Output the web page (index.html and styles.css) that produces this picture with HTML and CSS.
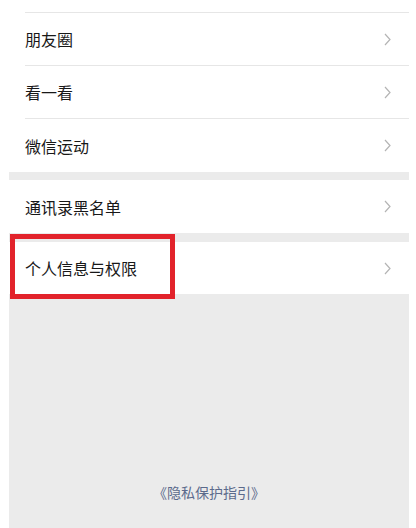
FILE: index.html
```html
<!DOCTYPE html>
<html lang="zh-CN">
<head>
<meta charset="utf-8">
<link rel="stylesheet" href="styles.css">
</head>
<body>
<div class="page">
  <div class="group">
    <div class="stub"></div>
    <div class="row"><div class="row-body"><span class="label">朋友圈</span><svg class="chev" viewBox="0 0 7 13" width="7" height="13"><polyline points="1,1 6,6.5 1,12" /></svg></div></div>
    <div class="row"><div class="row-body"><span class="label">看一看</span><svg class="chev" viewBox="0 0 7 13" width="7" height="13"><polyline points="1,1 6,6.5 1,12" /></svg></div></div>
    <div class="row"><div class="row-body tall"><span class="label">微信运动</span><svg class="chev" viewBox="0 0 7 13" width="7" height="13"><polyline points="1,1 6,6.5 1,12" /></svg></div></div>
  </div>
  <div class="group">
    <div class="row"><div class="row-body first"><span class="label">通讯录黑名单</span><svg class="chev" viewBox="0 0 7 13" width="7" height="13"><polyline points="1,1 6,6.5 1,12" /></svg></div></div>
  </div>
  <div class="group highlight-group">
    <div class="row"><div class="row-body first short"><span class="label">个人信息与权限</span><svg class="chev" viewBox="0 0 7 13" width="7" height="13"><polyline points="1,1 6,6.5 1,12" /></svg></div></div>
    <div class="highlight"></div>
  </div>
  <div class="footer"><span class="link">《隐私保护指引》</span></div>
</div>
</body>
</html>
```

FILE: styles.css
```css
html, body {
  margin: 0;
  padding: 0;
  background: #ffffff;
}
body {
  font-family: "Noto Sans CJK SC", "Noto Sans", sans-serif;
}
.page {
  margin-left: 9px;
  width: 400px;
  height: 528px;
  background: #ebebeb;
  display: flex;
  flex-direction: column;
  gap: 8px;
}
.group {
  background: #ffffff;
}
.highlight-group {
  position: relative;
  margin-top: 1px;
}
.stub {
  height: 12px;
}
.row {
  padding-left: 16px;
}
.row-body {
  height: 52px;
  border-top: 1px solid #e6e6e6;
  display: flex;
  align-items: center;
  justify-content: space-between;
  padding-right: 18px;
}
.row-body.tall {
  height: 53px;
}
.row-body.first {
  border-top: none;
  height: 53px;
}
.row-body.short {
  height: 52px;
}
.label {
  font-size: 16px;
  line-height: 22px;
  color: #181818;
}
.chev {
  display: block;
  fill: none;
  stroke: #b4b4b4;
  stroke-width: 1.2;
}
.highlight {
  position: absolute;
  left: 1px;
  top: -8px;
  width: 155px;
  height: 55px;
  border: 5px solid #e2232b;
}
.footer {
  margin-top: auto;
  padding-bottom: 25px;
  text-align: center;
}
.link {
  font-size: 14px;
  line-height: 20px;
  color: #5b6a8c;
}
```
